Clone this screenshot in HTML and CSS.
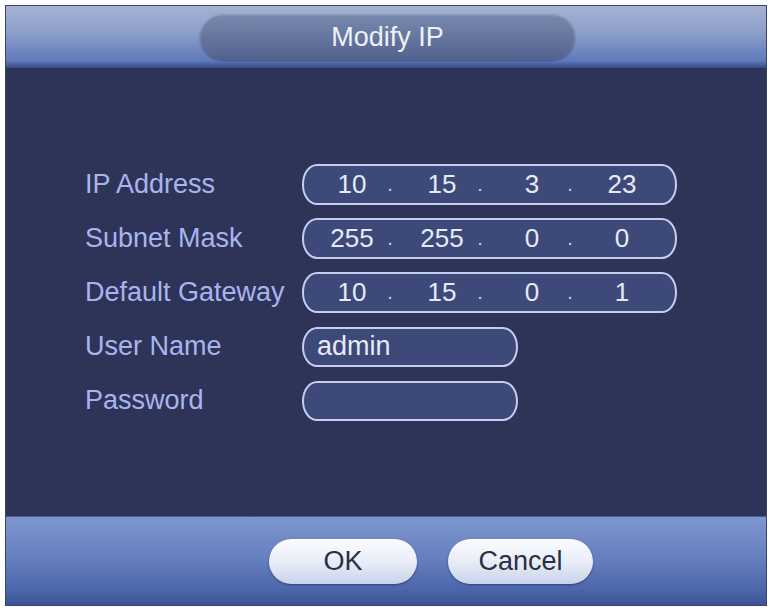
FILE: index.html
```html
<!DOCTYPE html>
<html lang="en">
<head>
  <meta charset="UTF-8" />
  <title>Modify IP</title>
  <link rel="stylesheet" href="styles.css">
</head>
<body>
  <div class="dialog">
    <div class="dialog-header">
      <div class="title-pill">Modify IP</div>
    </div>

    <div class="dialog-body">
      <div class="form-row">
        <div class="label">IP Address</div>
        <div class="field ip-field">
          <span class="octet">10</span><span class="dot">.</span>
          <span class="octet">15</span><span class="dot">.</span>
          <span class="octet">3</span><span class="dot">.</span>
          <span class="octet">23</span>
        </div>
      </div>
      <div class="form-row">
        <div class="label">Subnet Mask</div>
        <div class="field ip-field">
          <span class="octet">255</span><span class="dot">.</span>
          <span class="octet">255</span><span class="dot">.</span>
          <span class="octet">0</span><span class="dot">.</span>
          <span class="octet">0</span>
        </div>
      </div>
      <div class="form-row">
        <div class="label">Default Gateway</div>
        <div class="field ip-field">
          <span class="octet">10</span><span class="dot">.</span>
          <span class="octet">15</span><span class="dot">.</span>
          <span class="octet">0</span><span class="dot">.</span>
          <span class="octet">1</span>
        </div>
      </div>
      <div class="form-row">
        <div class="label">User Name</div>
        <div class="field text-field">admin</div>
      </div>
      <div class="form-row">
        <div class="label">Password</div>
        <div class="field text-field"></div>
      </div>
    </div>

    <div class="dialog-footer">
      <button class="btn btn-ok">OK</button>
      <button class="btn btn-cancel">Cancel</button>
    </div>
  </div>
</body>
</html>
```

FILE: styles.css
```css
body {
  margin: 0;
  background-color: #ffffff;
  font-family: "Liberation Sans", Arial, sans-serif;
}

.dialog {
  margin: 5px 6px 0 5px;
  height: 601px;
  border: 1px solid #3a4470;
  box-sizing: border-box;
  display: flex;
  flex-direction: column;
  background-color: #2e3458;
}

.dialog-header {
  height: 62px;
  flex: none;
  display: flex;
  align-items: center;
  padding-left: 194px;
  background: linear-gradient(to bottom, #a6b2d3 0%, #8b9dc9 45%, #5f7bbb 88%, #3a4a80 100%);
  border-bottom: 1px solid #283260;
}

.title-pill {
  width: 375px;
  height: 46px;
  border-radius: 23px;
  display: flex;
  align-items: center;
  justify-content: center;
  color: #eef1f8;
  font-size: 27px;
  background: linear-gradient(to bottom, #7888ae 0%, #66769f 50%, #52628e 100%);
  box-shadow: inset 0 1px 2px rgba(255, 255, 255, 0.25), 0 1px 2px rgba(30, 40, 80, 0.5);
}

.dialog-body {
  flex: 1;
  padding: 95px 0 0 79px;
  display: flex;
  flex-direction: column;
  gap: 13px;
}

.form-row {
  display: flex;
  align-items: center;
  height: 41px;
}

.label {
  width: 217px;
  color: #a8b4ee;
  font-size: 27px;
  white-space: nowrap;
}

.field {
  height: 41px;
  box-sizing: border-box;
  border: 2px solid #c6cdef;
  border-radius: 15px / 20px;
  background-color: #3d4979;
  color: #e6eaf6;
  font-size: 26px;
  display: flex;
  align-items: center;
}

.ip-field {
  width: 375px;
  padding-left: 20px;
}

.octet {
  width: 56px;
  text-align: center;
}

.dot {
  width: 20px;
  margin-right: 14px;
  text-align: center;
  font-size: 20px;
  color: #c8cfe8;
}

.text-field {
  width: 216px;
  height: 40px;
  padding-left: 13px;
  font-size: 27px;
}

.dialog-footer {
  height: 88px;
  flex: none;
  display: flex;
  align-items: center;
  gap: 31px;
  padding-left: 263px;
  background: linear-gradient(to bottom, #7f97cf 0%, #6680c0 45%, #4a64a8 85%, #3b5396 100%);
  border-top: 1px solid #4a5a90;
}

.btn {
  height: 45px;
  border: none;
  border-radius: 23px;
  font-family: "Liberation Sans", Arial, sans-serif;
  font-size: 27px;
  color: #2a3042;
  background: linear-gradient(to bottom, #fbfcfe 0%, #e8edf7 50%, #c9d3ea 100%);
  box-shadow: 0 1px 2px rgba(20, 30, 70, 0.5);
  cursor: pointer;
  padding: 0;
}

.btn-ok {
  width: 148px;
}

.btn-cancel {
  width: 145px;
}
```
